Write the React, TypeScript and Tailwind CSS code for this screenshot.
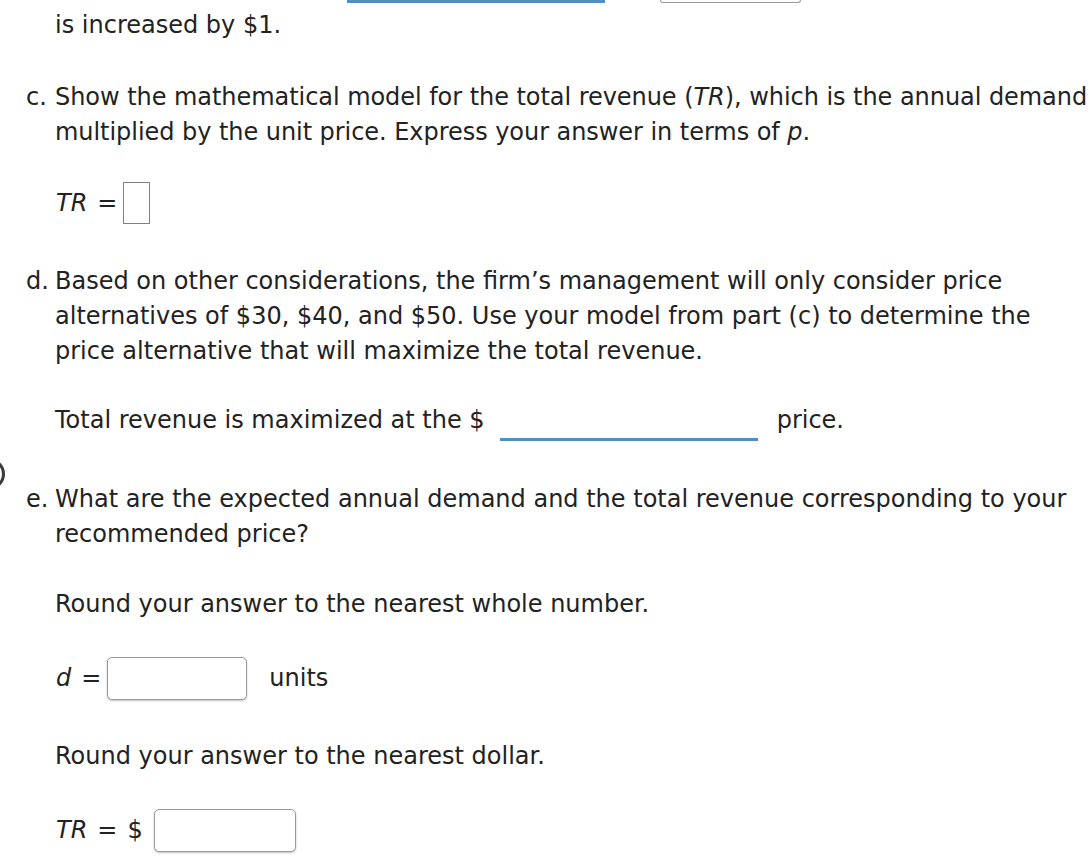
import React from "react";

const verdana = "font-['Verdana','DejaVu_Sans',sans-serif]";
const tahoma = "font-['Tahoma','DejaVu_Sans',sans-serif]";

function Blank({ className = "" }: { className?: string }) {
  return <div className={`shrink-0 rounded-[5px] border border-[#9a9a9a] bg-white shadow-[0_1px_2px_rgba(0,0,0,0.25)] ${className}`} />;
}

function Para({ marker, children, className = "" }: { marker: string; children: React.ReactNode; className?: string }) {
  return (
    <div className={`flex w-[1070px] ${className}`}>
      <span className="w-[29px] shrink-0">{marker}</span>
      <p className="flex-1">{children}</p>
    </div>
  );
}

export default function App() {
  return (
    <div className={`relative min-h-[867px] w-[1089px] overflow-hidden bg-white text-[24px] leading-[35px] text-[#222] ${verdana}`}>
      {/* leftover bits from the previous part */}
      <div className="flex h-[3px] items-end">
        <div className="ml-[347px] h-[3px] w-[258px] bg-[#4f8fc4]" />
        <div className="ml-[55px] h-[3px] w-[141px] rounded-b-[5px] border-x border-b border-[#9a9a9a]" />
      </div>

      <div className="absolute left-[-27px] top-[458px] h-[32px] w-[32px] rounded-full border-[3px] border-[#3a3a3a]" />

      <div className="pl-[26px]">
        <p className="mt-[5px] ml-[29px]">is increased by $1.</p>

        <Para marker="c." className="mt-[37px] tracking-[-0.05px]">
          Show the mathematical model for the total revenue (<i>TR</i>), which is the annual demand multiplied by the unit
          price. Express your answer in terms of <i>p</i>.
        </Para>

        <div className="mt-[32px] ml-[30px] flex h-[42px] items-center">
          <i>TR</i>
          <span className="ml-[10px]">=</span>
          <div className="ml-[6px] h-[42px] w-[27px] border border-[#808080]" />
        </div>

        <Para marker="d." className="mt-[40px]">
          Based on other considerations, the firm’s management will only consider price alternatives of $30, $40, and
          $50. Use your model from part (c) to determine the price alternative that will maximize the total revenue.
        </Para>

        <div className="mt-[34px] ml-[29px] flex h-[35px] items-start">
          <span>Total revenue is maximized at the $</span>
          <div className="ml-[15px] h-[38px] w-[258px] shrink-0 border-b-[3px] border-[#4f8fc4]" />
          <span className="ml-[19px]">price.</span>
        </div>

        <Para marker="e." className="mt-[44px]">
          What are the expected annual demand and the total revenue corresponding to your recommended price?
        </Para>

        <p className={`mt-[35px] ml-[29px] ${tahoma}`}>Round your answer to the nearest whole number.</p>

        <div className="mt-[35px] ml-[30px] flex h-[43px] items-center">
          <i>d</i>
          <span className="ml-[10px]">=</span>
          <Blank className="ml-[6px] h-[43px] w-[140px]" />
          <span className="ml-[22px]">units</span>
        </div>

        <p className={`mt-[39px] ml-[29px] ${tahoma}`}>Round your answer to the nearest dollar.</p>

        <div className="mt-[35px] ml-[30px] flex h-[43px] items-center">
          <i>TR</i>
          <span className="ml-[10px]">=</span>
          <span className="ml-[10px]">$</span>
          <Blank className="ml-[11px] h-[43px] w-[142px]" />
        </div>
      </div>
    </div>
  );
}
